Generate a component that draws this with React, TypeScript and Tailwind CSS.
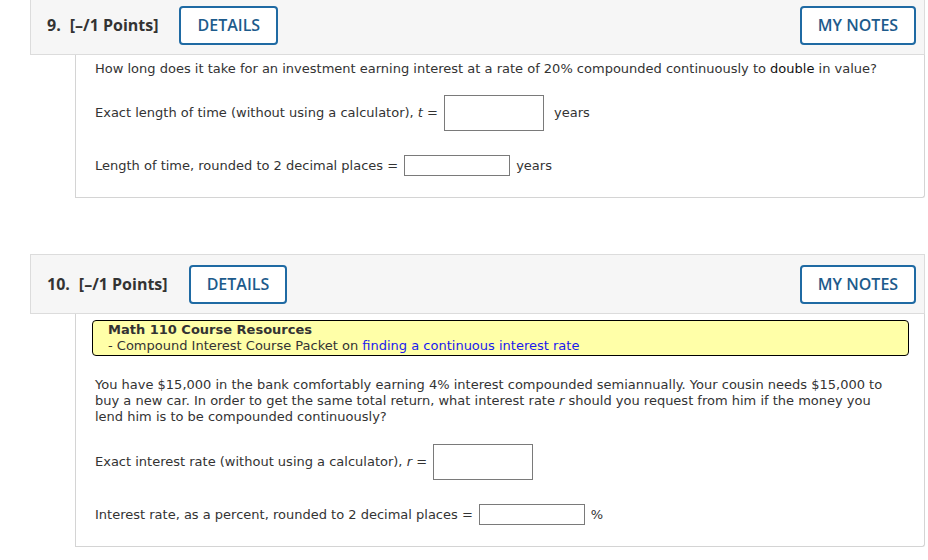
import React from 'react';

const bodyFont = "font-['Verdana','DejaVu_Sans',sans-serif]";
const headFont = "font-['Open_Sans','Noto_Sans',sans-serif]";

interface HeaderProps {
  num: string;
}

const QuestionHeader: React.FC<HeaderProps> = ({ num }) => {
  return (
    <div
      className={`flex items-center justify-between h-[60px] w-[895px] border border-[#dcdcdc] bg-[#f6f6f6] pl-[16px] pr-[8px] ${headFont}`}
    >
      <div className="flex items-center">
        <span className="text-[16px] font-bold text-[#333333]">{num}</span>
        <span className="ml-[9px] text-[16px] font-bold text-[#333333]">[–/1 Points]</span>
        <button className="ml-[21px] h-[39px] px-[16px] rounded-[4px] border-2 border-[#1f6aa3] bg-white text-[16px] font-semibold text-[#1d5b8c]">
          DETAILS
        </button>
      </div>
      <button className="h-[39px] w-[116px] rounded-[4px] border-2 border-[#1f6aa3] bg-white text-[16px] font-semibold text-[#1d5b8c]">
        MY NOTES
      </button>
    </div>
  );
};

const Input: React.FC<{ big?: boolean; className?: string }> = ({ big, className = '' }) => (
  <div
    className={`shrink-0 border border-[#7a7a7a] bg-white ${big ? 'w-[100px] h-[36px]' : 'w-[106px] h-[21px]'} ${className}`}
  />
);

const App: React.FC = () => {
  return (
    <div className={`w-[928px] h-[560px] overflow-hidden bg-white text-[13px] leading-[16px] text-[#333333] ${bodyFont}`}>
      <div className="pl-[30px] -mt-[5px]">
        {/* question 9 */}
        <QuestionHeader num="9." />
        <div className="ml-[45px] w-[850px] border-x border-b border-[#d4d4d4] rounded-br-[3px] pl-[19px] pt-[6px] pb-[21px]">
          <p>
            How long does it take for an investment earning interest at a rate of 20% compounded continuously to{' '}
            <span className="text-[#111]">double</span> in value?
          </p>
          <div className="mt-[18px] flex items-center">
            <span>
              Exact length of time (without using a calculator), <i>t</i> =
            </span>
            <Input big className="ml-[6px]" />
            <span className="ml-[10px]">years</span>
          </div>
          <div className="mt-[24px] flex items-center">
            <span>Length of time, rounded to 2 decimal places =</span>
            <Input className="ml-[6px]" />
            <span className="ml-[6px]">years</span>
          </div>
        </div>

        <div className="h-[56px]" />

        {/* question 10 */}
        <QuestionHeader num="10." />
        <div className="ml-[45px] w-[850px] border-x border-b border-[#d4d4d4] rounded-br-[3px] pt-[6px] pb-[21px]">
          <div className="ml-[16px] mr-[15px] h-[36px] rounded-[4px] border border-black bg-[#ffffa8] pl-[15px] pt-[1px]">
            <div className="font-bold text-[#333333]">Math 110 Course Resources</div>
            <div>
              - Compound Interest Course Packet on{' '}
              <span className="text-[#1a1aee]">finding a continuous interest rate</span>
            </div>
          </div>
          <div className="pl-[19px]">
            <p className="mt-[21px] w-[796px]">
              You have $15,000 in the bank comfortably earning 4% interest compounded semiannually. Your cousin needs $15,000 to
              buy a new car. In order to get the same total return, what interest rate <i>r</i> should you request from him if the money you
              lend him is to be compounded continuously?
            </p>
            <div className="mt-[19px] flex items-center">
              <span>
                Exact interest rate (without using a calculator), <i>r</i> =
              </span>
              <Input big className="ml-[6px]" />
            </div>
            <div className="mt-[24px] flex items-center">
              <span>Interest rate, as a percent, rounded to 2 decimal places =</span>
              <Input className="ml-[6px]" />
              <span className="ml-[6px]">%</span>
            </div>
          </div>
        </div>
      </div>
    </div>
  );
};

export default App;
